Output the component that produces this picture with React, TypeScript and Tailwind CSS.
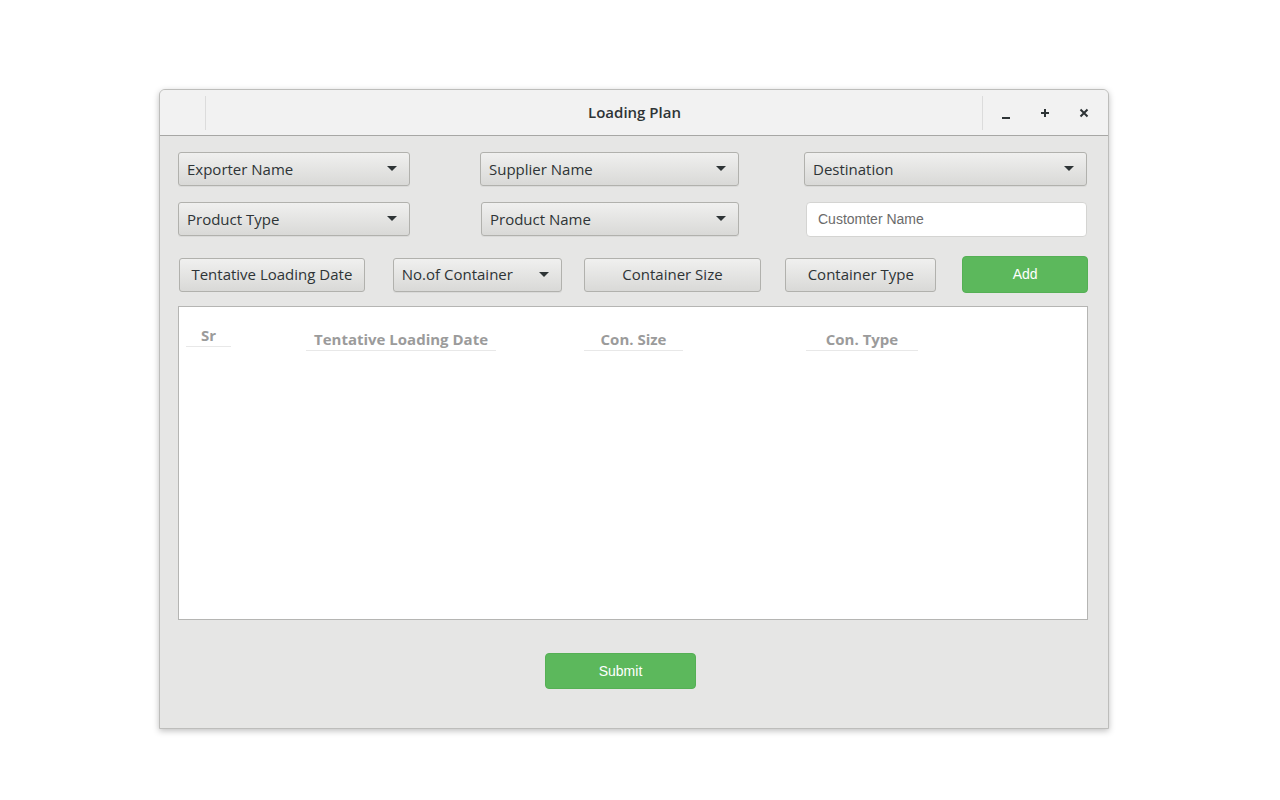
import { ReactNode } from "react";

const ui = { fontFamily: '"Open Sans", "DejaVu Sans", sans-serif' };
const arial = { fontFamily: '"Liberation Sans", Arial, sans-serif' };

function Caret() {
  return (
    <svg width="10" height="6" viewBox="0 0 10 6" className="shrink-0">
      <path d="M0 0h10L5 5z" fill="#2e3436" />
    </svg>
  );
}

function Select({ label, className }: { label: string; className: string }) {
  return (
    <div
      className={`flex h-[34px] items-center justify-between rounded-[3px] border border-[#b1b1ad] bg-gradient-to-b from-[#f0f0ef] to-[#d9d9d7] pl-2 pr-[12px] text-[15px] text-[#2e3436] shadow-[0_1px_0_rgba(0,0,0,0.05)] ${className}`}
    >
      <span>{label}</span>
      <Caret />
    </div>
  );
}

function Btn({ children, className }: { children: ReactNode; className: string }) {
  return (
    <div
      className={`flex h-[34px] items-center justify-center rounded-[3px] border border-[#b1b1ad] bg-gradient-to-b from-[#f0f0ef] to-[#d9d9d7] text-[15px] text-[#2e3436] ${className}`}
    >
      {children}
    </div>
  );
}

function HeadCell({ label, className }: { label: string; className: string }) {
  return (
    <div className={`flex h-[21px] items-start justify-center border-b border-[#e8e8e8] text-[15px] font-bold leading-[18px] text-[#9b9b9b] ${className}`}>
      {label}
    </div>
  );
}

export default function App() {
  return (
    <div className="min-h-[800px] w-full bg-white pt-[89px]" style={ui}>
      <div className="ml-[159px] w-[950px] overflow-hidden rounded-t-[6px] border border-[#bdbdbb] bg-[#e6e6e5] shadow-[0_2px_6px_rgba(0,0,0,0.25)]">
        {/* title bar */}
        <div className="flex h-[46px] items-center border-b border-[#a7a7a5] bg-[#f2f2f2]">
          <div className="h-[34px] w-[46px] border-r border-[#dcdcdc]" />
          <div className="flex-1 pl-[81px] text-center text-[15px] font-semibold text-[#2e3436]">Loading Plan</div>
          <div className="flex h-[34px] items-center border-l border-[#dcdcdc] pl-[18px]">
            <svg width="10" height="10" viewBox="0 0 10 10" className="mt-[4px]">
              <path d="M1 8h8" stroke="#2e3436" strokeWidth="2" />
            </svg>
            <svg width="10" height="10" viewBox="0 0 10 10" className="ml-[29px]">
              <path d="M5 1v8M1 5h8" stroke="#2e3436" strokeWidth="2" />
            </svg>
            <svg width="10" height="10" viewBox="0 0 10 10" className="ml-[29px] mr-[19px]">
              <path d="M1.5 1.5l7 7M8.5 1.5l-7 7" stroke="#2e3436" strokeWidth="2" />
            </svg>
          </div>
        </div>

        {/* body */}
        <div className="pl-[18px] pr-[20px] pt-[16px] pb-[39px]">
          <div className="flex">
            <Select label="Exporter Name" className="w-[232px]" />
            <Select label="Supplier Name" className="ml-[70px] w-[259px]" />
            <Select label="Destination" className="ml-[65px] w-[283px]" />
          </div>
          <div className="mt-[16px] flex">
            <Select label="Product Type" className="w-[232px]" />
            <Select label="Product Name" className="ml-[71px] w-[258px]" />
            <div
              className="ml-[67px] flex h-[35px] w-[281px] items-center rounded-[4px] border border-[#d4d4d2] bg-white pl-[11px] text-[14px] text-[#6b6b6b]"
              style={arial}
            >
              Customter Name
            </div>
          </div>
          <div className="mt-[19px] flex items-center">
            <Btn className="ml-[1px] w-[186px]">Tentative Loading Date</Btn>
            <Select label="No.of Container" className="ml-[28px] w-[169px]" />
            <Btn className="ml-[22px] w-[178px]">Container Size</Btn>
            <Btn className="ml-[24px] w-[151px]">Container Type</Btn>
            <div
              className="ml-[26px] flex h-[37px] w-[126px] items-center justify-center rounded-[4px] border border-[#55b055] bg-[#5cb85c] text-[14px] text-white"
              style={arial}
            >
              Add
            </div>
          </div>

          {/* table */}
          <div className="mt-[13px] h-[314px] w-[910px] border border-[#b5b5b3] bg-white">
            <div className="flex items-start">
              <HeadCell label="Sr" className="ml-[7px] mt-[19px] w-[45px]" />
              <HeadCell label="Tentative Loading Date" className="ml-[75px] mt-[23px] w-[190px]" />
              <HeadCell label="Con. Size" className="ml-[88px] mt-[23px] w-[99px]" />
              <HeadCell label="Con. Type" className="ml-[123px] mt-[23px] w-[112px]" />
            </div>
          </div>

          <div className="mt-[33px] flex">
            <div
              className="ml-[367px] flex h-[36px] w-[151px] items-center justify-center rounded-[4px] border border-[#55b055] bg-[#5cb85c] text-[14px] text-white"
              style={arial}
            >
              Submit
            </div>
          </div>
        </div>
      </div>
    </div>
  );
}
